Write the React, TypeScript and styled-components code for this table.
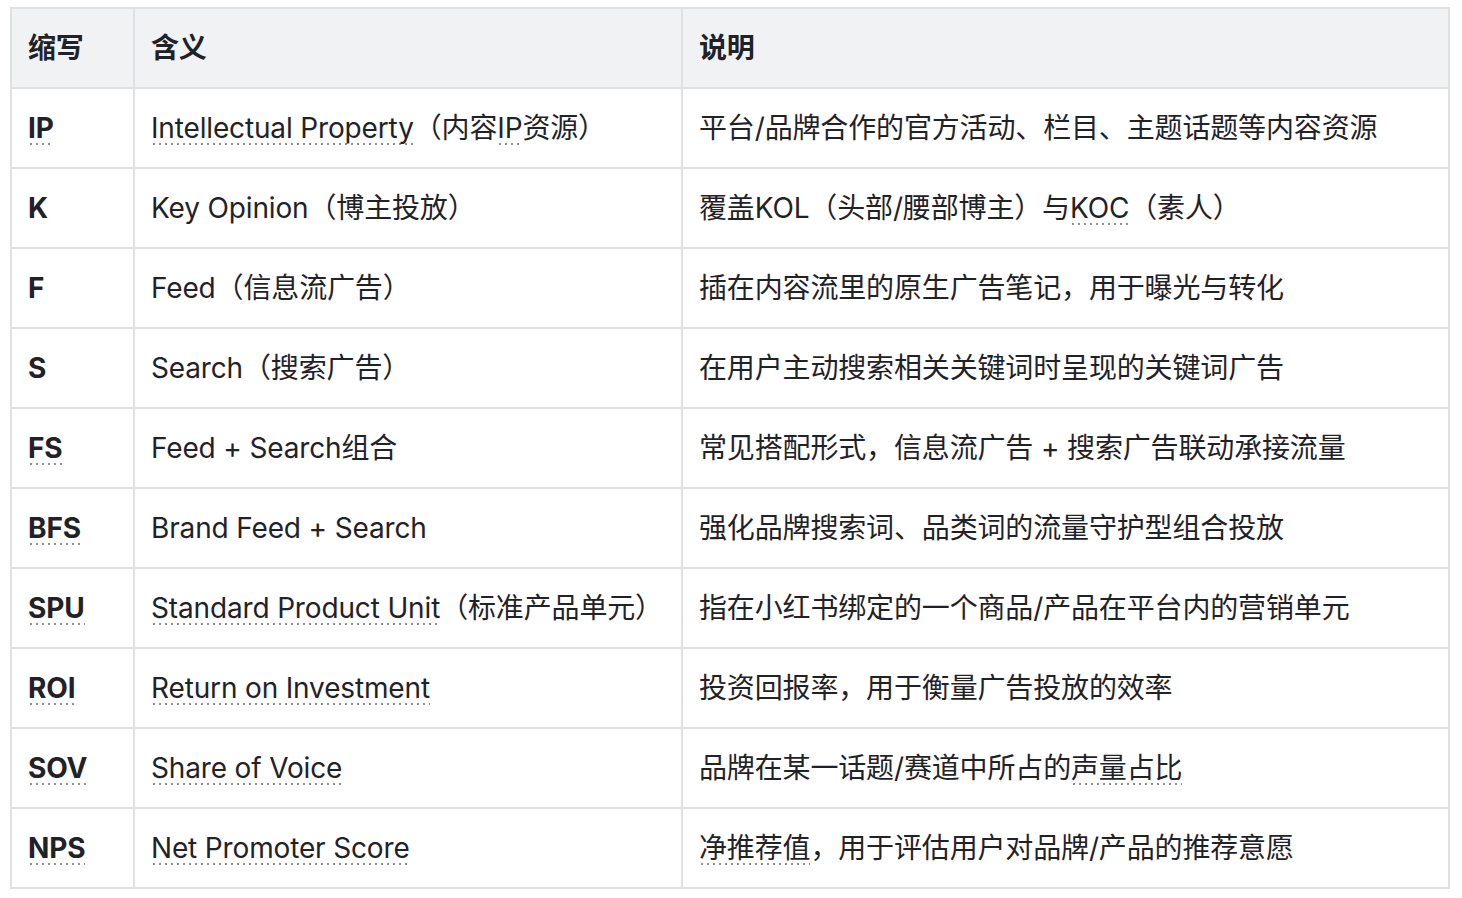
import React from "react";
import styled, { createGlobalStyle } from "styled-components";

const GlobalStyle = createGlobalStyle`
  html, body {
    margin: 0;
    padding: 0;
    background: #ffffff;
  }
  body {
    font-family: "Inter", "Noto Sans CJK SC", sans-serif;
    color: #1f2328;
  }
`;

const Page = styled.div`
  padding: 7px 12px 8px 10px;
`;

const Table = styled.table`
  width: 1440px;
  border-collapse: collapse;
  table-layout: fixed;
  font-size: 28px;
  letter-spacing: -0.15px;
  line-height: 1.3;
`;

const Col = styled.col<{ $w?: number }>`
  width: ${(p) => (p.$w ? `${p.$w}px` : "auto")};
`;

const HeadRow = styled.tr`
  background: #f1f2f4;
`;

const Th = styled.th`
  height: 78px;
  padding: 0 16px;
  border: 2px solid #dfe0e3;
  text-align: left;
  font-weight: 600;
`;

const Td = styled.td<{ $strong?: boolean }>`
  height: 78px;
  padding: 0 16px;
  border: 2px solid #dfe0e3;
  font-weight: ${(p) => (p.$strong ? 700 : 400)};
  white-space: nowrap;
`;

const Dotted = styled.span`
  background-image: linear-gradient(to right, #8e9196 2px, transparent 2px);
  background-size: 6px 2px;
  background-repeat: repeat-x;
  background-position: 2px 100%;
`;

type Row = {
  abbr: React.ReactNode;
  meaning: React.ReactNode;
  note: React.ReactNode;
};

const rows: Row[] = [
  {
    abbr: <Dotted>IP</Dotted>,
    meaning: (
      <>
        <Dotted>Intellectual Property</Dotted>（内容<Dotted>IP</Dotted>资源）
      </>
    ),
    note: "平台/品牌合作的官方活动、栏目、主题话题等内容资源",
  },
  {
    abbr: "K",
    meaning: "Key Opinion（博主投放）",
    note: (
      <>
        覆盖KOL（头部/腰部博主）与<Dotted>KOC</Dotted>（素人）
      </>
    ),
  },
  {
    abbr: "F",
    meaning: "Feed（信息流广告）",
    note: "插在内容流里的原生广告笔记，用于曝光与转化",
  },
  {
    abbr: "S",
    meaning: "Search（搜索广告）",
    note: "在用户主动搜索相关关键词时呈现的关键词广告",
  },
  {
    abbr: <Dotted>FS</Dotted>,
    meaning: "Feed + Search组合",
    note: "常见搭配形式，信息流广告 + 搜索广告联动承接流量",
  },
  {
    abbr: <Dotted>BFS</Dotted>,
    meaning: "Brand Feed + Search",
    note: "强化品牌搜索词、品类词的流量守护型组合投放",
  },
  {
    abbr: <Dotted>SPU</Dotted>,
    meaning: (
      <>
        <Dotted>Standard Product Unit</Dotted>（标准产品单元）
      </>
    ),
    note: "指在小红书绑定的一个商品/产品在平台内的营销单元",
  },
  {
    abbr: <Dotted>ROI</Dotted>,
    meaning: <Dotted>Return on Investment</Dotted>,
    note: "投资回报率，用于衡量广告投放的效率",
  },
  {
    abbr: <Dotted>SOV</Dotted>,
    meaning: <Dotted>Share of Voice</Dotted>,
    note: (
      <>
        品牌在某一话题/赛道中所占的<Dotted>声量占比</Dotted>
      </>
    ),
  },
  {
    abbr: <Dotted>NPS</Dotted>,
    meaning: <Dotted>Net Promoter Score</Dotted>,
    note: (
      <>
        <Dotted>净推荐值</Dotted>，用于评估用户对品牌/产品的推荐意愿
      </>
    ),
  },
];

const App = (): JSX.Element => {
  return (
    <Page>
      <GlobalStyle />
      <Table>
        <colgroup>
          <Col $w={123} />
          <Col $w={548} />
          <Col />
        </colgroup>
        <thead>
          <HeadRow>
            <Th>缩写</Th>
            <Th>含义</Th>
            <Th>说明</Th>
          </HeadRow>
        </thead>
        <tbody>
          {rows.map((r, i) => (
            <tr key={i}>
              <Td $strong>{r.abbr}</Td>
              <Td>{r.meaning}</Td>
              <Td>{r.note}</Td>
            </tr>
          ))}
        </tbody>
      </Table>
    </Page>
  );
};

export default App;
